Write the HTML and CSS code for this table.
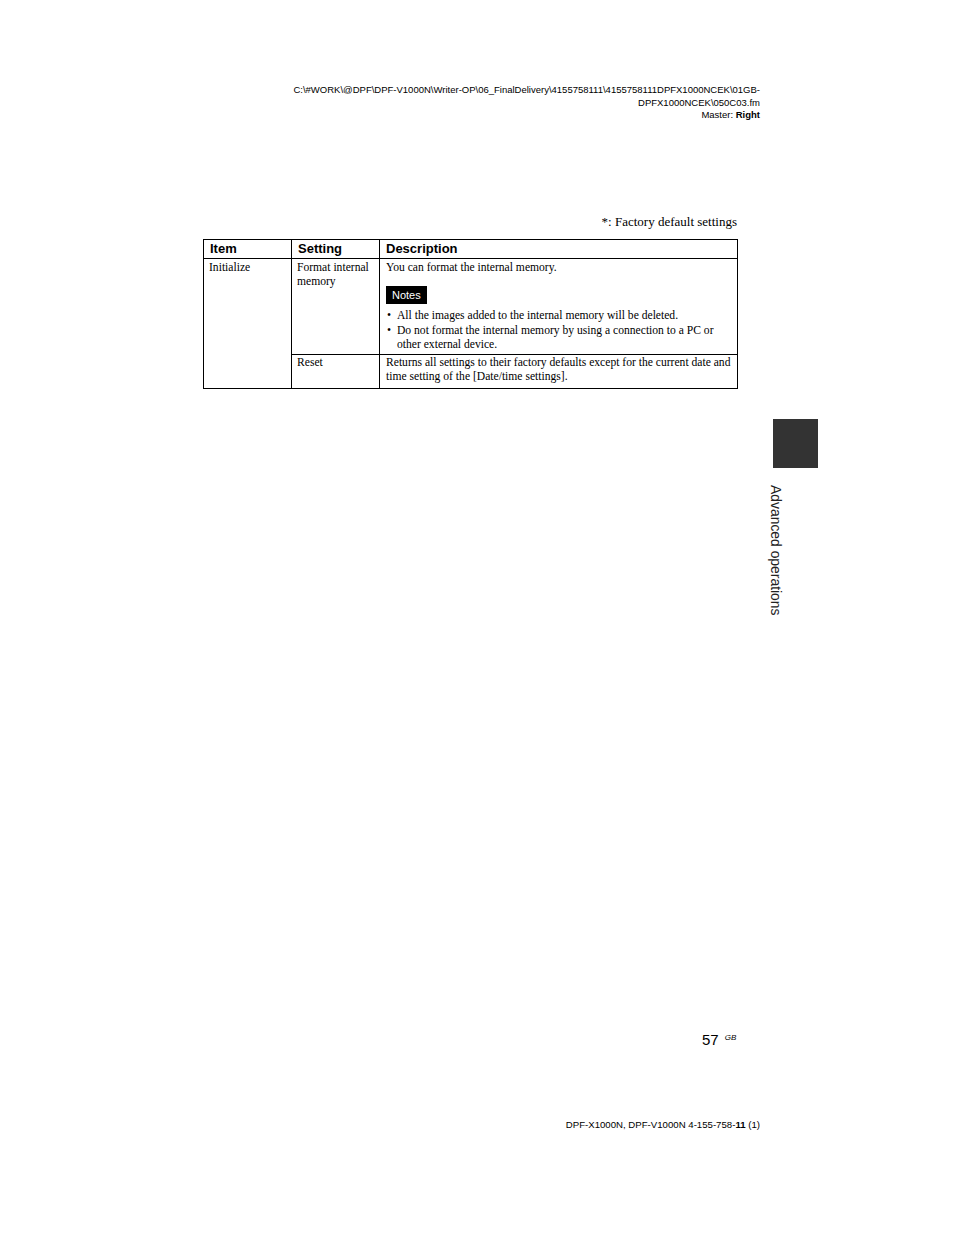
FILE: index.html
```html
<!DOCTYPE html>
<html>
<head>
<meta charset="utf-8">
<link rel="stylesheet" href="styles.css">
</head>
<body>
<div class="page">
  <div class="header">
    <div>C:\#WORK\@DPF\DPF-V1000N\Writer-OP\06_FinalDelivery\4155758111\4155758111DPFX1000NCEK\01GB-</div>
    <div>DPFX1000NCEK\050C03.fm</div>
    <div>Master: <b>Right</b></div>
  </div>
  <div class="main">
    <div class="content">
      <div class="legend">*: Factory default settings</div>
      <table class="tbl">
        <colgroup><col class="c1"><col class="c2"><col class="c3"></colgroup>
        <tr class="head"><th>Item</th><th>Setting</th><th>Description</th></tr>
        <tr>
          <td rowspan="2">Initialize</td>
          <td>Format internal memory</td>
          <td>
            <div>You can format the internal memory.</div>
            <div class="notes"><span>Notes</span></div>
            <ul>
              <li>All the images added to the internal memory will be deleted.</li>
              <li>Do not format the internal memory by using a connection to a PC or other external device.</li>
            </ul>
          </td>
        </tr>
        <tr class="reset">
          <td>Reset</td>
          <td>Returns all settings to their factory defaults except for the current date and time setting of the [Date/time settings].</td>
        </tr>
      </table>
    </div>
    <div class="side">
      <div class="tab"></div>
      <div class="vtext">Advanced operations</div>
    </div>
  </div>
  <div class="pagenum">57 <i>GB</i></div>
  <div class="footer">DPF-X1000N, DPF-V1000N 4-155-758-<b>11</b> (1)</div>
</div>
</body>
</html>
```
FILE: styles.css
```css
html, body { margin: 0; padding: 0; background: #fff; }
.page { width: 954px; height: 1235px; overflow: hidden; color: #000; }
.header {
  padding-top: 84px;
  padding-right: 194px;
  text-align: right;
  font-family: "Liberation Sans Narrow", "Liberation Sans", sans-serif;
  font-size: 9.5px;
  line-height: 12.5px;
}
.main { display: flex; align-items: flex-start; height: 420px; margin-top: 92px; }
.content { margin-left: 203px; width: 535px; }
.legend {
  text-align: right;
  font-family: "Liberation Serif", serif;
  font-size: 13px;
  line-height: 16px;
  margin-bottom: 9px;
  padding-right: 1px;
}
.tbl {
  width: 535px;
  border-collapse: collapse;
  table-layout: fixed;
  font-family: "Liberation Serif", serif;
  font-size: 11.6px;
  line-height: 14.6px;
}
.c1 { width: 88px; }
.c2 { width: 88px; }
.tbl th, .tbl td { border: 1px solid #000; vertical-align: top; text-align: left; }
.tbl th {
  font-family: "Liberation Sans", sans-serif;
  font-size: 13px;
  font-weight: bold;
  padding: 1px 6px 1px 6px;
  line-height: 16px;
}
.tbl td { padding: 2px 3px 1px 5px; }
.tbl .reset td { padding-top: 1px; padding-bottom: 3px; }
.tbl td:last-child { padding-left: 6px; }
.notes { margin-top: 11px; margin-bottom: 5px; height: 18px; }
.notes span {
  display: inline-block;
  vertical-align: top;
  background: #000;
  color: #fff;
  font-family: "Liberation Sans Narrow", "Liberation Sans", sans-serif;
  font-size: 11px;
  line-height: 18px;
  height: 18px;
  padding: 0 6px;
}
.tbl ul { list-style: none; margin: 0; padding: 0; }
.tbl li { position: relative; padding-left: 11px; }
.tbl li::before { content: "\2022"; position: absolute; left: 1px; }
.side { margin-left: 35px; padding-top: 205px; width: 45px; }
.tab { width: 45px; height: 49px; background: #333; }
.vtext {
  writing-mode: vertical-rl;
  font-family: "Liberation Sans", sans-serif;
  font-size: 13.9px;
  color: #222;
  margin-top: 17px;
  margin-left: -5px;
  line-height: 16px;
}
.pagenum {
  margin-top: 395px;
  margin-left: 702px;
  font-family: "Liberation Sans", sans-serif;
  font-size: 15px;
  line-height: 18px;
}
.pagenum i { font-size: 8px; vertical-align: 5px; margin-left: 2px; }
.footer {
  margin-top: 70px;
  padding-right: 194px;
  text-align: right;
  font-family: "Liberation Sans Narrow", "Liberation Sans", sans-serif;
  font-size: 9.65px;
  line-height: 12px;
}
```
